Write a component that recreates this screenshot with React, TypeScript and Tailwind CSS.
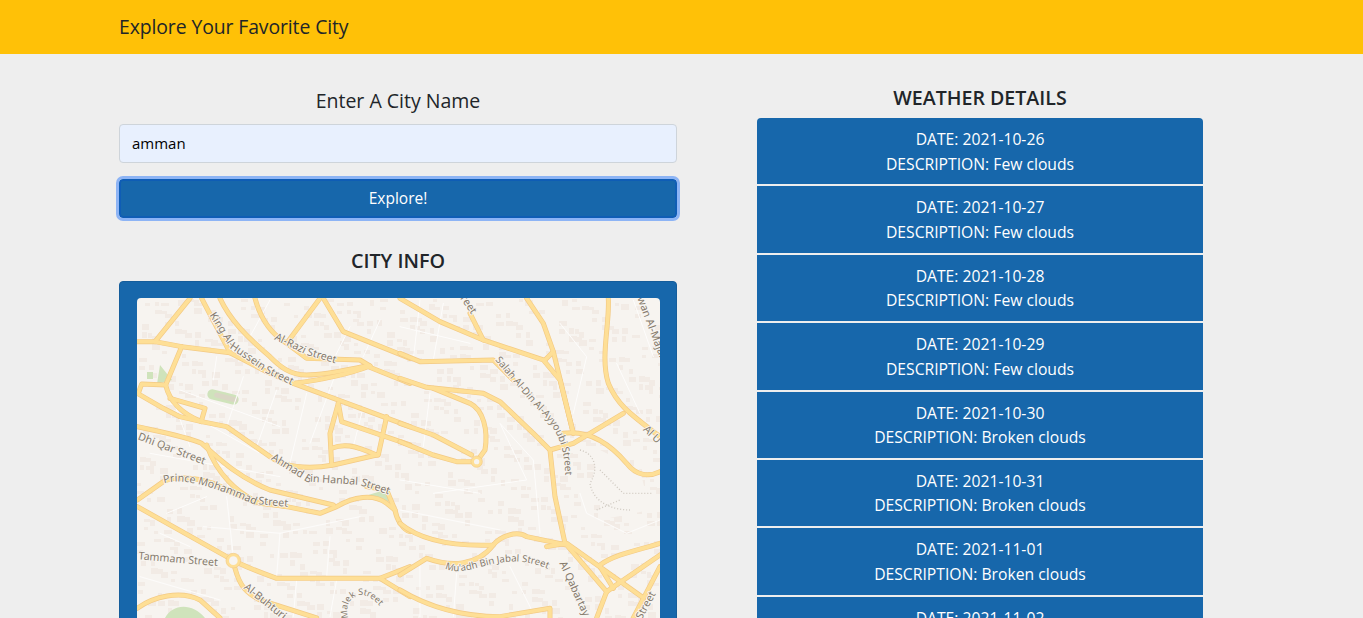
const weather = [
  ["2021-10-26", "Few clouds"],
  ["2021-10-27", "Few clouds"],
  ["2021-10-28", "Few clouds"],
  ["2021-10-29", "Few clouds"],
  ["2021-10-30", "Broken clouds"],
  ["2021-10-31", "Broken clouds"],
  ["2021-11-01", "Broken clouds"],
  ["2021-11-02", "Broken clouds"],
]

// road coordinates are read off two 3x crops of the map, so each half has its own group
const leftRoads = [
  "M52 185 L105 185 L185 200 L330 218",
  "M210 55 L105 185",
  "M185 200 L137 315 L65 312 L55 340",
  "M137 315 C145 350 170 395 245 425",
  "M52 340 L130 385 L180 410 L245 425 L320 440 L450 530 C490 560 560 570 640 555 L770 525",
  "M150 355 L255 385 L245 420",
  "M245 55 L330 218 L440 275 L520 310 L870 440",
  "M300 55 C330 120 380 170 450 230 C480 260 510 285 560 285 C620 285 680 270 740 258 L870 310",
  "M405 55 C420 110 450 160 500 190 L600 55",
  "M610 55 L670 155 L870 235",
  "M500 190 L560 235 L720 240 L750 258",
  "M520 310 C600 300 680 285 750 258",
  "M655 370 L630 460 L635 555",
  "M655 370 L665 425 L870 495",
  "M800 410 L775 525",
  "M635 505 C670 490 700 495 770 525",
  "M52 440 C120 455 200 470 245 490 C290 530 350 590 450 630 L640 675",
  "M260 495 C290 580 350 640 420 670 L500 680 L600 700 L650 680 C700 650 760 640 800 670 L825 690",
  "M740 620 L800 630 L825 690 C830 720 850 750 870 755",
  "M52 660 L130 605 C160 590 220 590 280 610 L400 665 L500 680",
  "M52 680 L320 830 C350 850 400 870 470 895 L780 895 L870 860",
  "M780 895 L870 950",
  "M345 865 C360 920 380 940 420 960 L590 1014",
  "M52 985 C100 950 180 930 240 960 L300 1014",
]

const rightRoads = [
  "M0 55 L120 125 L250 180 L430 240 L480 300 L520 460",
  "M210 100 L250 180",
  "M380 55 L430 130 L460 215 L520 460",
  "M435 240 L460 215",
  "M0 220 L60 245 L280 240 L340 300",
  "M0 295 L80 322 L250 340 L300 365 L400 460 L450 510 L465 650 L495 790",
  "M100 325 L210 370 C250 390 265 450 255 510 L230 545",
  "M0 430 L100 465 L215 525",
  "M0 485 L100 525 L170 545 L215 545",
  "M625 55 C630 130 600 230 625 310 C650 370 680 395 780 470",
  "M670 400 L520 490 L450 510",
  "M490 460 C560 450 620 480 680 550 C710 590 750 590 780 575",
  "M0 730 C60 780 150 800 280 795 C300 770 350 750 380 770 L500 795 L620 935",
  "M280 795 C230 860 150 860 80 835 L0 885",
  "M440 800 L500 790 L725 950",
  "M600 855 C650 820 720 810 780 790",
  "M620 935 L780 825",
  "M600 860 L640 925",
  "M620 935 L590 1014",
  "M780 860 L700 1014",
  "M0 930 C100 990 200 1010 300 1010 L450 985 L450 1014",
]

const minorStreets = [
  "M137 300 L210 500 M180 330 L480 440 M150 370 L420 520 M290 230 L280 300 M370 290 L320 440",
  "M470 330 L410 500 M560 340 L510 550 M640 300 L570 490 M730 380 L700 500 M140 700 L260 650",
  "M320 650 L340 830 M480 760 L470 890 M630 770 L620 890 M120 760 L210 800 M250 740 L480 760 L720 710",
  "M530 900 L520 1010 M650 900 L630 1010 M60 890 L300 960 M90 520 L480 590",
  "M690 140 L640 240 M780 120 L730 230 M450 60 L390 170",
]

const rightMinor = [
  "M60 60 L40 240 M130 70 L100 240 M0 140 L210 190 M480 130 L560 230 L520 400",
  "M90 340 L70 500 M100 640 L380 600 L300 430 L400 540 L420 760 M0 600 L240 640",
  "M540 640 L560 700 L680 760 L780 720 M650 250 L720 400 M700 60 L760 230",
  "M60 850 L60 1010 M170 880 L160 1010 M330 860 L400 1000 M0 690 L300 750",
]

// small building blocks, scattered with a fixed hash so every render gives the same map
const blocks: number[][] = []
for (let i = 0; i < 1100; i++) {
  const a = (i * 2654435761) % 4294967296
  const b = (i * 40503 + 12345) % 65536
  blocks.push([137 + (a % 523), 298 + (b % 320), 4 + (i % 5), 3 + (i % 4)])
}

function MapLayer({ roads, minor, x }: { roads: string[]; minor: string[]; x: number }) {
  return (
    <g transform={`translate(${x} 280) scale(0.3333)`} fill="none" strokeLinecap="round" strokeLinejoin="round">
      <path d={minor.join(" ")} stroke="#fdfcfb" strokeWidth="3" />
      {roads.map((d) => (
        <path key={d} d={d} stroke="#f3ca85" strokeWidth="15" />
      ))}
      {roads.map((d) => (
        <path key={d + "i"} d={d} stroke="#fedf96" strokeWidth="11" />
      ))}
    </g>
  )
}

function StreetLabel({ id, d, text, size = 32 }: { id: string; d: string; text: string; size?: number }) {
  return (
    <>
      <path id={id} d={d} fill="none" />
      <text
        fontSize={size}
        fill="#857a6c"
        stroke="#f8f5f1"
        strokeWidth="5"
        paintOrder="stroke"
        fontFamily="'Noto Sans', sans-serif"
      >
        <textPath href={`#${id}`}>{text}</textPath>
      </text>
    </>
  )
}

function CityMap() {
  return (
    <svg viewBox="137 298 523 340" className="block w-full h-[340px] rounded-t-[4px] bg-[#f7f4f0]">
      {blocks.map(([x, y, w, h], i) => (
        <rect key={i} x={x} y={y} width={w} height={h} fill="#f2ebe5" />
      ))}
      <path d="M600 450 L640 470 L650 510 L600 520 Z" fill="#f7f4f0" />
      <path d="M160 365 L172 380 L157 384 Z M368 495 L385 490 L390 502 Z M165 618 C172 604 192 602 205 618 Z" fill="#cfe3bb" />
      <rect x="147" y="372" width="6" height="7" fill="#cfe3bb" />
      <rect x="207" y="392" width="32" height="10" rx="5" fill="#cfe3bb" transform="rotate(14 223 397)" />
      <rect x="214" y="395" width="24" height="5" rx="2.5" fill="#d9d6c4" transform="rotate(14 226 397)" />
      <MapLayer roads={leftRoads} minor={minorStreets} x={120} />
      <MapLayer roads={rightRoads} minor={rightMinor} x={400} />
      <g transform="translate(120 280) scale(0.3333)">
        <circle cx="340" cy="842" r="22" fill="#fedf96" stroke="#f3ca85" strokeWidth="2" />
        <circle cx="340" cy="842" r="13" fill="#f7f4f0" />
        <StreetLabel id="l1" d="M268 105 L330 205 L440 280 L520 318 L600 350" text="King Al-Hussein Street" />
        <StreetLabel id="l2" d="M462 178 L560 225 L680 260" text="Al-Razi Street" />
        <StreetLabel id="l3" d="M52 478 L280 565" text="Dhi Qar Street" />
        <StreetLabel id="l4" d="M132 610 C200 590 300 630 400 672 L560 685" text="Prince Mohammad Street" />
        <StreetLabel id="l5" d="M452 538 L560 605 L720 615 L840 655" text="Ahmad Bin Hanbal Street" />
        <StreetLabel id="l6" d="M55 838 L340 862" text="Tammam Street" />
        <StreetLabel id="l7" d="M370 925 L520 1045" text="Al-Buhturi" />
        <StreetLabel id="l8" d="M685 1014 C665 950 740 900 800 1010" text="Malek Street" size={27} />
      </g>
      <g transform="translate(400 280) scale(0.3333)">
        <circle cx="230" cy="545" r="17" fill="#fedf96" stroke="#f3ca85" strokeWidth="2" />
        <circle cx="230" cy="545" r="8" fill="#f7f4f0" />
        <path
          d="M540 510 C580 520 600 560 570 610 C580 670 640 690 690 690 M600 570 L670 640 L760 640 M590 690 L660 660"
          fill="none"
          stroke="#cfc9c0"
          strokeWidth="4"
          strokeDasharray="3 6"
        />
        <StreetLabel id="r1" d="M285 240 L400 375 C450 425 505 470 495 640" text="Salah Al-Din Al-Ayyoubi Street" size={30} />
        <StreetLabel id="r2" d="M135 865 C210 905 310 790 470 880" text="Mu'adh Bin Jabal Street" size={29} />
        <StreetLabel id="r3" d="M478 850 L560 1030" text="Al Qabartay" />
        <StreetLabel id="r4" d="M712 55 L800 290" text="wan Al-Majal" />
        <StreetLabel id="r5" d="M728 450 L790 510" text="Al U" />
        <StreetLabel id="r6" d="M725 1020 L790 900" text="Street" />
        <StreetLabel id="r7" d="M180 55 L240 140" text="reet" />
      </g>
    </svg>
  )
}

export default function App() {
  return (
    <div className="h-[618px] overflow-hidden bg-[#eeeeee] text-[#212529] font-['Open_Sans','Noto_Sans',sans-serif]">
      <nav className="h-[54px] bg-[#ffc107] pl-[119px] flex items-center">
        <span className="text-[19.4px] tracking-[-0.1px]">Explore Your Favorite City</span>
      </nav>
      <div className="flex gap-[80px] pl-[119px]">
        <div className="w-[558px] pt-[32px]">
          <p className="text-center text-[19.5px] leading-[30px] mb-[8px]">Enter A City Name</p>
          <input
            readOnly
            value="amman"
            className="block w-full h-[39px] rounded-[4px] border border-[#ced4da] bg-[#e8f0fe] px-[12px] pb-[2px] text-[15px] text-black outline-none"
          />
          <button className="block w-full h-[39px] mt-[16px] rounded-[4px] bg-[#1767ab] border-2 border-[#0f5db5] text-[15.5px] text-white outline-[3px] outline-[#8db4f5]">
            Explore!
          </button>
          <h2 className="mt-[28px] mb-[5px] text-center text-[19.8px] leading-[30px] font-semibold">CITY INFO</h2>
          <div className="rounded-[4px] bg-[#1767ab] border border-[#155d9b] pl-[17px] pr-[16px] py-[16px]">
            <CityMap />
          </div>
        </div>
        <div className="w-[446px] pt-[29px]">
          <h2 className="mb-[5px] text-center text-[19.6px] leading-[30px] font-semibold">WEATHER DETAILS</h2>
          <ul className="flex flex-col gap-[2px]">
            {weather.map(([date, description], i) => (
              <li
                key={date}
                className={`h-[66.4px] bg-[#1767ab] text-white text-center text-[15.7px] leading-[24.5px] pt-[9px] ${i === 0 ? "rounded-t-[4px]" : ""}`}
              >
                <div>DATE: {date}</div>
                <div>DESCRIPTION: {description}</div>
              </li>
            ))}
          </ul>
        </div>
      </div>
    </div>
  )
}
